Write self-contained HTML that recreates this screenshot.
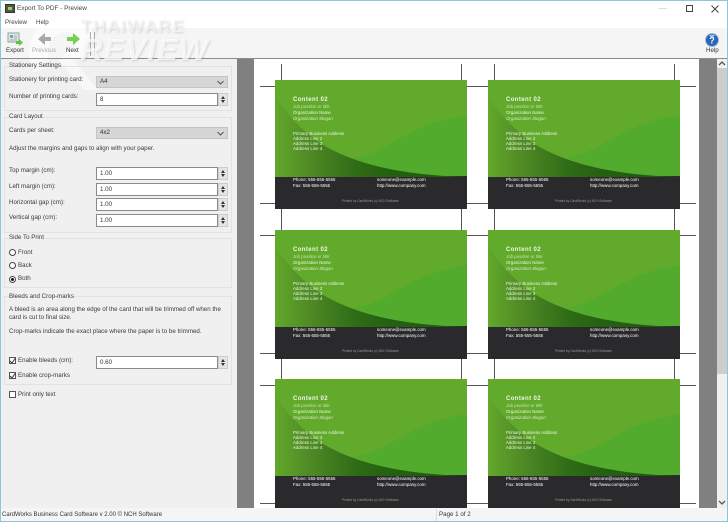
<!DOCTYPE html>
<html><head><meta charset="utf-8"><style>
*{box-sizing:border-box}
html,body{margin:0;padding:0}
body{width:728px;height:522px;position:relative;overflow:hidden;background:#fff;font-family:"Liberation Sans",sans-serif;font-size:6.2px;color:#3a3a3a}
.a{position:absolute;white-space:nowrap}
.t{position:absolute;white-space:nowrap;line-height:10px}
.g{position:absolute;left:4px;width:228px;border:1px solid #e2e2e2}
.i{position:absolute;left:96px;width:122px;height:13px;background:#fff;border:1px solid #8a8a8a;padding-left:3px;line-height:11px;color:#333}
.s{position:absolute;left:218px;width:10px;height:13px;background:#e4e4e4;border:1px solid #ccc}
.s:before{content:"";position:absolute;left:2px;top:2px;border:2px solid transparent;border-top:0;border-bottom:3px solid #333}
.s:after{content:"";position:absolute;left:2px;bottom:2px;border:2px solid transparent;border-bottom:0;border-top:3px solid #333}
.c{position:absolute;left:96px;width:132px;height:12px;background:#d6d6d6;border:1px solid #c4c4c4;padding-left:3px;line-height:10px;color:#333}
.c svg{position:absolute;right:3px;top:3px}
.r{position:absolute;left:9px;width:7px;height:7px;border:1px solid #444;border-radius:50%;background:#fff}
.k{position:absolute;left:9px;width:7px;height:7px;border:1px solid #555;background:#fff}
.k svg{position:absolute;left:0;top:0}
.card{position:absolute;width:192px;height:129px;overflow:hidden;font-size:4.4px;color:#eef6e6}
.card svg{position:absolute;left:0;top:0}
.card div{position:absolute;white-space:nowrap;line-height:6px}
.card .h{font-size:6px;font-weight:bold;letter-spacing:.4px;line-height:8px}
.card .j{font-style:italic;color:#c8e0b0}
.card .o{font-style:italic;color:#d8eac8}
.card .w{color:#fff}
.card .p{font-size:3.2px;color:#999}
#root{position:absolute;left:0;top:0;width:728px;height:522px;filter:blur(.3px)}
</style></head><body>
<svg width="0" height="0" style="position:absolute"><defs>
<linearGradient id="dk" x1="0" x2="1" y1="0" y2="0"><stop offset="0" stop-color="#62a82b"/><stop offset=".18" stop-color="#4f8a25"/><stop offset=".42" stop-color="#2f6c16"/><stop offset=".6" stop-color="#255f11"/><stop offset="1" stop-color="#1f5a10"/></linearGradient>
<symbol id="art" viewBox="0 0 192 129" width="192" height="129">
<rect width="192" height="129" fill="#2a2a2c"/>
<rect width="192" height="96" fill="#62aa2b"/>
<path d="M78 78C105 74 125 56 150 46 165 40 180 37 192 35V96H130Z" fill="#52ab2d"/>
<path d="M0 16C10 32 30 55 50 66 78 82 120 95 192 97H0Z" fill="url(#dk)"/>
</symbol></defs></svg>
<div id="root">
<!-- toolbar background -->
<div class="a" style="left:1px;top:28px;width:726px;height:30px;background:#f5f5f5"></div>
<div class="a" style="left:1px;top:59px;width:236px;height:449px;background:#f0f0f0"></div>
<!-- watermark logo, behind the labels -->
<svg class="a" style="left:0;top:0" width="240" height="100">
<path d="M34 72C22 50 32 22 60 16 82 12 96 26 92 42 90 52 82 58 74 60L98 90H84L58 60 70 50C80 46 80 32 66 32 50 32 44 52 50 68Z" fill="#fff" opacity=".55"/>
</svg>
<!-- title -->
<div class="a" style="left:5px;top:4px;width:10px;height:9px;background:#4a5a44;border:1px solid #333"><div class="a" style="left:2px;top:2px;width:4px;height:3px;background:#a8c85a"></div></div>
<div class="t" style="left:17px;top:4px;color:#444;font-size:6.4px">Export To PDF - Preview</div>
<div class="a" style="left:659px;top:8px;width:8px;height:1px;background:#ddd"></div>
<div class="a" style="left:686px;top:5px;width:7px;height:7px;border:1px solid #444"></div>
<svg class="a" style="left:711px;top:5px" width="8" height="8"><path d="M.5.5L7.5 7.5M7.5.5L.5 7.5" stroke="#444" fill="none"/></svg>
<!-- menu -->
<div class="t" style="left:5px;top:18px;color:#444">Preview</div>
<div class="t" style="left:36px;top:18px;color:#444">Help</div>
<!-- toolbar -->
<div class="a" style="left:1px;top:58px;width:726px;height:1px;background:#8c8c8c"></div>
<svg class="a" style="left:7px;top:32px" width="16" height="15"><rect x="1" y="1" width="11" height="9" fill="#dfe9e4" stroke="#8fa7a0"/><rect x="3" y="3" width="3" height="3" fill="#7aa0c0"/><path d="M7 4h3M7 6h3M3 8h7" stroke="#9ab"/><path d="M9 9h3V7l4 3.500-4 3.500v-2H9z" fill="#6cc04a"/></svg>
<svg class="a" style="left:38px;top:33px" width="14" height="12"><path d="M13 4H7V0L0 6l7 6V8h6z" fill="#a8aaa8"/></svg>
<svg class="a" style="left:66px;top:33px" width="14" height="12"><path d="M1 4h6V0l7 6-7 6V8H1z" fill="#76d050"/></svg>
<div class="t" style="left:6px;top:46px;color:#333">Export</div>
<div class="t" style="left:32px;top:46px;color:#aaa">Previous</div>
<div class="t" style="left:66px;top:46px;color:#333">Next</div>
<div class="a" style="left:90px;top:32px;width:1px;height:24px;background:#aaa"></div>
<div class="a" style="left:94px;top:32px;width:1px;height:24px;background:#aaa"></div>
<svg class="a" style="left:705px;top:33px" width="14" height="14"><circle cx="7" cy="7" r="6.500" fill="#2a66b8" stroke="#9ab8d8"/><path d="M4 2.500A6 6 0 0 1 10 2.500L7 5Z" fill="#9cc2ea"/><text x="7" y="10.500" font-size="9" font-weight="bold" font-family="Liberation Sans" text-anchor="middle" fill="#fff">?</text></svg>
<div class="t" style="left:706px;top:46px;color:#333">Help</div>

<!-- left panel -->
<div class="a" style="left:237px;top:59px;width:17px;height:449px;background:#808080"></div>
<div class="g" style="top:66px;height:45px"></div>
<div class="t" style="left:9px;top:61px">Stationery Settings</div>
<div class="t" style="left:9px;top:75px">Stationery for printing card:</div>
<div class="c" style="top:76px">A4<svg width="7" height="5"><path d="M.5 1L3.500 4 6.500 1" fill="none" stroke="#555"/></svg></div>
<div class="t" style="left:9px;top:92px">Number of printing cards:</div>
<div class="i" style="top:93px">8</div><div class="s" style="top:93px"></div>

<div class="g" style="top:117px;height:116px"></div>
<div class="t" style="left:9px;top:112px;background:#f0f0f0">Card Layout</div>
<div class="t" style="left:9px;top:126px">Cards per sheet:</div>
<div class="c" style="top:127px">4x2<svg width="7" height="5"><path d="M.5 1L3.500 4 6.500 1" fill="none" stroke="#555"/></svg></div>
<div class="t" style="left:9px;top:144px">Adjust the margins and gaps to align with your paper.</div>
<div class="t" style="left:9px;top:166px">Top margin (cm):</div>
<div class="i" style="top:167px">1.00</div><div class="s" style="top:167px"></div>
<div class="t" style="left:9px;top:182px">Left margin (cm):</div>
<div class="i" style="top:183px">1.00</div><div class="s" style="top:183px"></div>
<div class="t" style="left:9px;top:198px">Horizontal gap (cm):</div>
<div class="i" style="top:198px">1.00</div><div class="s" style="top:198px"></div>
<div class="t" style="left:9px;top:213px">Vertical gap (cm):</div>
<div class="i" style="top:214px">1.00</div><div class="s" style="top:214px"></div>

<div class="g" style="top:238px;height:50px"></div>
<div class="t" style="left:9px;top:233px;background:#f0f0f0">Side To Print</div>
<div class="r" style="top:249px"></div><div class="t" style="left:18px;top:248px">Front</div>
<div class="r" style="top:262px"></div><div class="t" style="left:18px;top:261px">Back</div>
<div class="r" style="top:276px"><div class="a" style="left:1px;top:1px;width:3px;height:3px;border-radius:50%;background:#111"></div></div><div class="t" style="left:18px;top:274px">Both</div>

<div class="g" style="top:296px;height:89px"></div>
<div class="t" style="left:9px;top:292px;background:#f0f0f0">Bleeds and Crop-marks</div>
<div class="t" style="left:9px;top:305px;font-size:6.15px">A bleed is an area along the edge of the card that will be trimmed off when the</div>
<div class="t" style="left:9px;top:313px">card is cut to final size.</div>
<div class="t" style="left:9px;top:327px">Crop-marks indicate the exact place where the paper is to be trimmed.</div>
<div class="k" style="top:357px"><svg width="6" height="6"><path d="M0 3L2 5 5.500 0" fill="none" stroke="#333"/></svg></div><div class="t" style="left:18px;top:356px">Enable bleeds (cm):</div>
<div class="i" style="top:356px">0.60</div><div class="s" style="top:356px"></div>
<div class="k" style="top:372px"><svg width="6" height="6"><path d="M0 3L2 5 5.500 0" fill="none" stroke="#333"/></svg></div><div class="t" style="left:18px;top:371px">Enable crop-marks</div>
<div class="k" style="top:391px"></div><div class="t" style="left:18px;top:390px">Print only text</div>

<!-- preview -->
<div class="a" style="left:254px;top:59px;width:445px;height:449px;background:#fff"></div>
<div class="a" style="left:699px;top:59px;width:18px;height:449px;background:#808080"></div>
<svg class="a" style="left:254px;top:59px" width="445" height="448" fill="none" stroke="#555">
<path d="M6 27.500H442M6 144.500H442M6 176.500H442M6 294.500H442M6 326.500H442M6 444.500H442"/>
<path d="M27.500 5V170M207.500 5V170M240.500 5V170M420.500 5V170"/>
<path d="M27.500 150V321M207.500 150V321M240.500 150V321M420.500 150V321"/>
</svg>

<div class="card" style="left:275px;top:80px"><svg width="192" height="129"><use href="#art"/></svg>
<div class="h" style="left:18px;top:16px">Content 02</div><div class="j" style="left:18px;top:24px">Job position or title</div><div style="left:18px;top:30px">Organization Name</div><div class="o" style="left:18px;top:36px">Organization Slogan</div><div style="left:18px;top:51px">Primary Business Address</div><div style="left:18px;top:56px">Address Line 2</div><div style="left:18px;top:61px">Address Line 3</div><div style="left:18px;top:66px">Address Line 4</div><div class="w" style="left:18px;top:97px">Phone: 555-555-5555</div><div class="w" style="left:18px;top:103px">Fax: 555-555-5555</div><div class="w" style="left:102px;top:97px">someone@example.com</div><div class="w" style="left:102px;top:103px">http://www.company.com</div><div class="p" style="left:67px;top:118px">Printed by CardWorks (c) NCH Software</div></div>
<div class="card" style="left:488px;top:80px"><svg width="192" height="129"><use href="#art"/></svg>
<div class="h" style="left:18px;top:16px">Content 02</div><div class="j" style="left:18px;top:24px">Job position or title</div><div style="left:18px;top:30px">Organization Name</div><div class="o" style="left:18px;top:36px">Organization Slogan</div><div style="left:18px;top:51px">Primary Business Address</div><div style="left:18px;top:56px">Address Line 2</div><div style="left:18px;top:61px">Address Line 3</div><div style="left:18px;top:66px">Address Line 4</div><div class="w" style="left:18px;top:97px">Phone: 555-555-5555</div><div class="w" style="left:18px;top:103px">Fax: 555-555-5555</div><div class="w" style="left:102px;top:97px">someone@example.com</div><div class="w" style="left:102px;top:103px">http://www.company.com</div><div class="p" style="left:67px;top:118px">Printed by CardWorks (c) NCH Software</div></div>
<div class="card" style="left:275px;top:230px"><svg width="192" height="129"><use href="#art"/></svg>
<div class="h" style="left:18px;top:16px">Content 02</div><div class="j" style="left:18px;top:24px">Job position or title</div><div style="left:18px;top:30px">Organization Name</div><div class="o" style="left:18px;top:36px">Organization Slogan</div><div style="left:18px;top:51px">Primary Business Address</div><div style="left:18px;top:56px">Address Line 2</div><div style="left:18px;top:61px">Address Line 3</div><div style="left:18px;top:66px">Address Line 4</div><div class="w" style="left:18px;top:97px">Phone: 555-555-5555</div><div class="w" style="left:18px;top:103px">Fax: 555-555-5555</div><div class="w" style="left:102px;top:97px">someone@example.com</div><div class="w" style="left:102px;top:103px">http://www.company.com</div><div class="p" style="left:67px;top:118px">Printed by CardWorks (c) NCH Software</div></div>
<div class="card" style="left:488px;top:230px"><svg width="192" height="129"><use href="#art"/></svg>
<div class="h" style="left:18px;top:16px">Content 02</div><div class="j" style="left:18px;top:24px">Job position or title</div><div style="left:18px;top:30px">Organization Name</div><div class="o" style="left:18px;top:36px">Organization Slogan</div><div style="left:18px;top:51px">Primary Business Address</div><div style="left:18px;top:56px">Address Line 2</div><div style="left:18px;top:61px">Address Line 3</div><div style="left:18px;top:66px">Address Line 4</div><div class="w" style="left:18px;top:97px">Phone: 555-555-5555</div><div class="w" style="left:18px;top:103px">Fax: 555-555-5555</div><div class="w" style="left:102px;top:97px">someone@example.com</div><div class="w" style="left:102px;top:103px">http://www.company.com</div><div class="p" style="left:67px;top:118px">Printed by CardWorks (c) NCH Software</div></div>
<div class="card" style="left:275px;top:379px"><svg width="192" height="129"><use href="#art"/></svg>
<div class="h" style="left:18px;top:16px">Content 02</div><div class="j" style="left:18px;top:24px">Job position or title</div><div style="left:18px;top:30px">Organization Name</div><div class="o" style="left:18px;top:36px">Organization Slogan</div><div style="left:18px;top:51px">Primary Business Address</div><div style="left:18px;top:56px">Address Line 2</div><div style="left:18px;top:61px">Address Line 3</div><div style="left:18px;top:66px">Address Line 4</div><div class="w" style="left:18px;top:97px">Phone: 555-555-5555</div><div class="w" style="left:18px;top:103px">Fax: 555-555-5555</div><div class="w" style="left:102px;top:97px">someone@example.com</div><div class="w" style="left:102px;top:103px">http://www.company.com</div><div class="p" style="left:67px;top:118px">Printed by CardWorks (c) NCH Software</div></div>
<div class="card" style="left:488px;top:379px"><svg width="192" height="129"><use href="#art"/></svg>
<div class="h" style="left:18px;top:16px">Content 02</div><div class="j" style="left:18px;top:24px">Job position or title</div><div style="left:18px;top:30px">Organization Name</div><div class="o" style="left:18px;top:36px">Organization Slogan</div><div style="left:18px;top:51px">Primary Business Address</div><div style="left:18px;top:56px">Address Line 2</div><div style="left:18px;top:61px">Address Line 3</div><div style="left:18px;top:66px">Address Line 4</div><div class="w" style="left:18px;top:97px">Phone: 555-555-5555</div><div class="w" style="left:18px;top:103px">Fax: 555-555-5555</div><div class="w" style="left:102px;top:97px">someone@example.com</div><div class="w" style="left:102px;top:103px">http://www.company.com</div><div class="p" style="left:67px;top:118px">Printed by CardWorks (c) NCH Software</div></div>

<!-- scrollbar -->
<div class="a" style="left:717px;top:59px;width:10px;height:449px;background:#f0f0f0"></div>
<div class="a" style="left:717px;top:68px;width:10px;height:306px;background:#cdcdcd"></div>
<svg class="a" style="left:718px;top:61px" width="8" height="5"><path d="M1 4L4 1 7 4" fill="none" stroke="#555" stroke-width="1.300"/></svg>
<svg class="a" style="left:718px;top:500px" width="8" height="5"><path d="M1 1L4 4 7 1" fill="none" stroke="#555" stroke-width="1.300"/></svg>

<!-- status -->
<div class="a" style="left:1px;top:508px;width:726px;height:13px;background:#f5f5f5"></div>
<div class="a" style="left:436px;top:509px;width:1px;height:12px;background:#ddd"></div>
<div class="t" style="left:2px;top:510px;color:#333;font-size:6px">CardWorks Business Card Software v 2.00 © NCH Software</div>
<div class="t" style="left:439px;top:510px;color:#333">Page 1 of 2</div>

<!-- watermark wordmark -->
<svg class="a" style="left:0;top:0;filter:drop-shadow(1px 1px 1px rgba(120,120,120,.35))" width="240" height="100">
<text x="81" y="32" font-family="Liberation Sans" font-size="17" fill="#f2f2f2" textLength="103">THAIWARE</text>
<text x="80" y="60" font-family="Liberation Sans" font-size="31" font-weight="bold" font-style="italic" fill="#fff" opacity=".72" textLength="128">REVIEW</text>
</svg>
</div>
<!-- window border -->
<div class="a" style="left:0;top:0;width:728px;height:522px;border:1px solid #8cc6d8;pointer-events:none"></div>
</body></html>
